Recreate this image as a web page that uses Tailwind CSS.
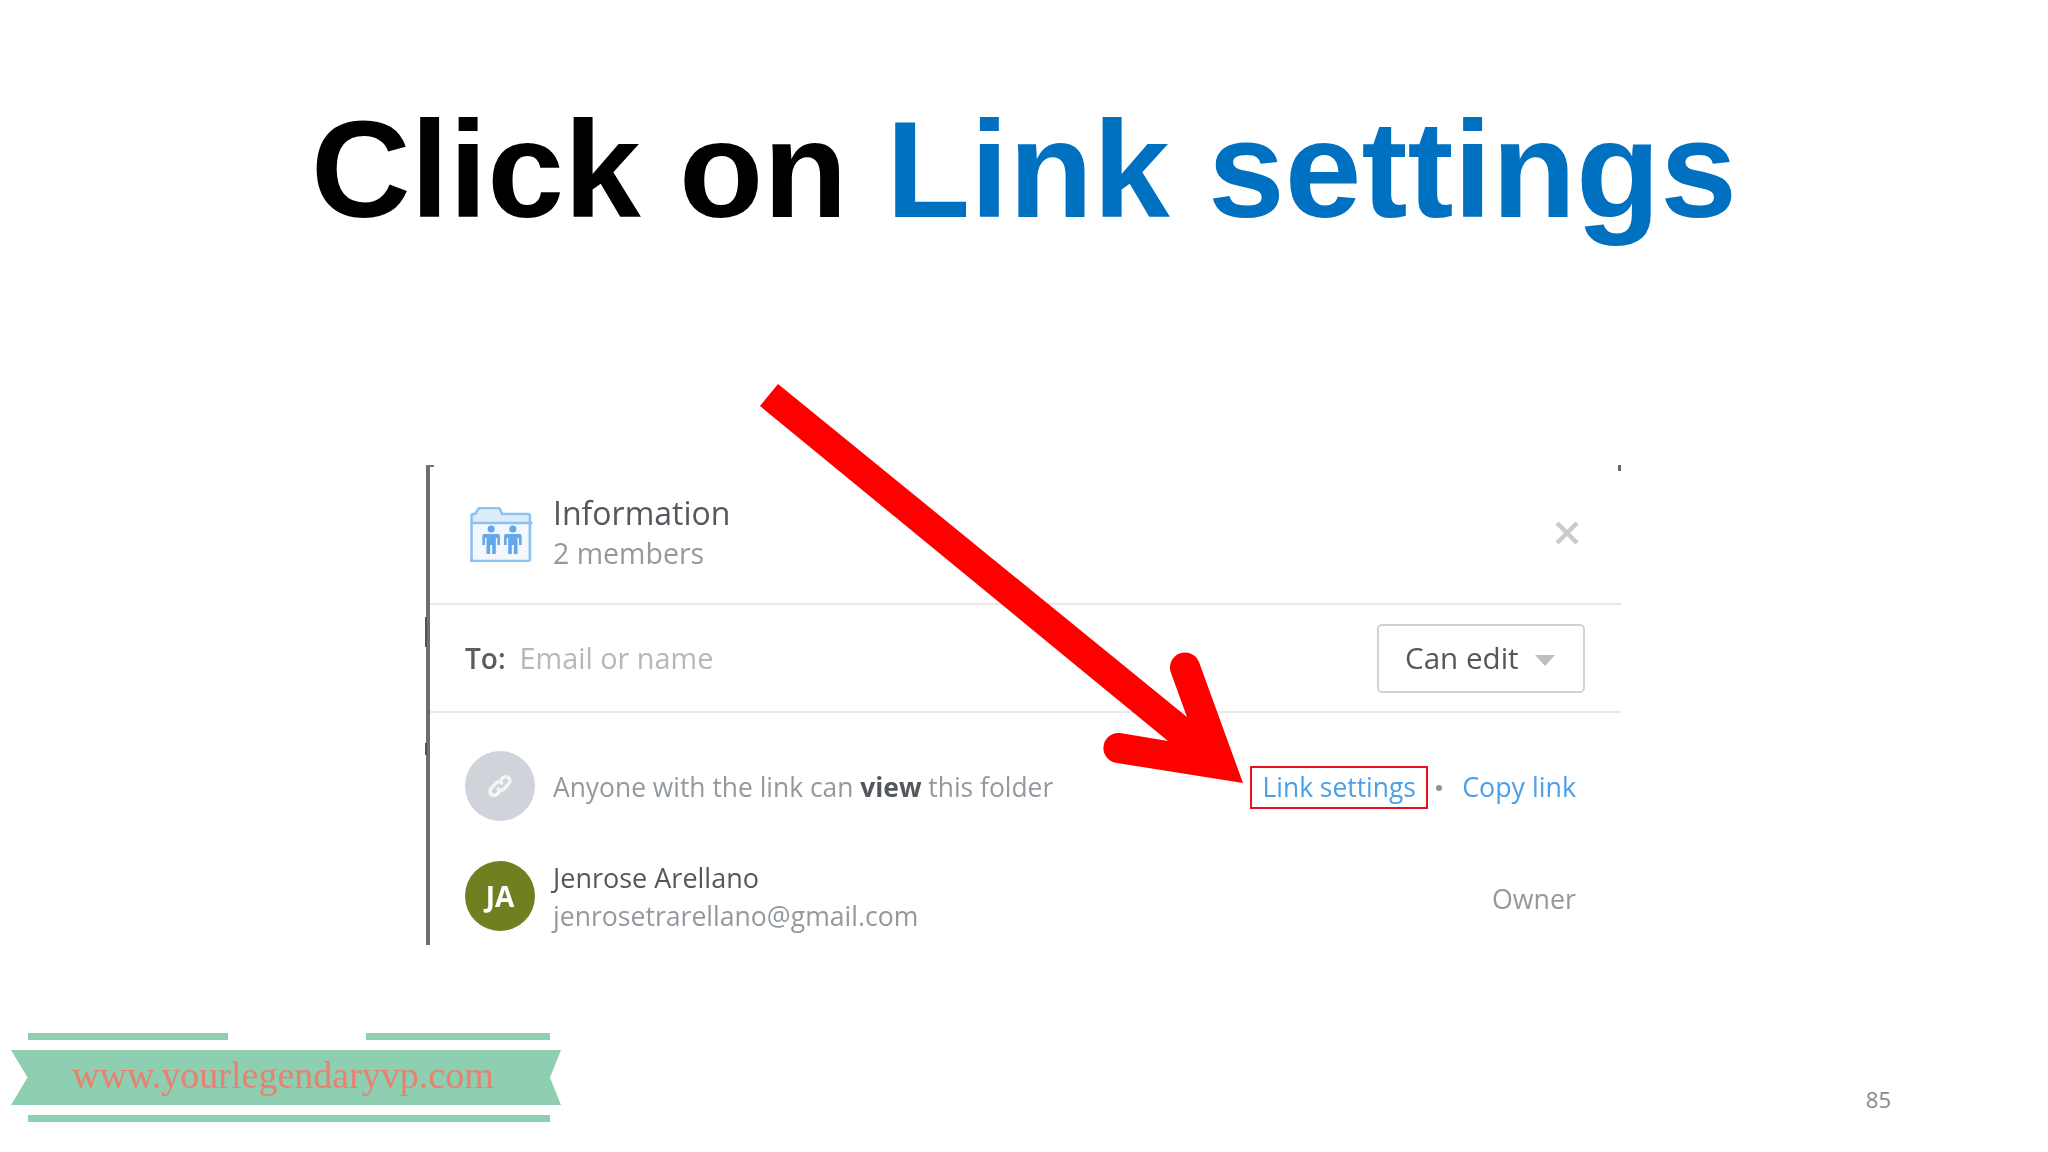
<!DOCTYPE html>
<html lang="en">
<head>
  <meta charset="UTF-8">
  <title>Click on Link settings</title>
  <script src="https://cdn.jsdelivr.net/npm/@tailwindcss/browser@4"></script>
</head>
<body class="bg-white font-['Open_Sans',sans-serif]">
  <div class="relative w-[2048px] h-[1152px] overflow-hidden">
    <h1 class="pt-[89px] h-[465px] text-center text-[138px] leading-[160px] font-bold font-['Liberation_Sans',sans-serif] text-black">Click on <span class="text-[#0070c0]">Link settings</span></h1>

    <!-- screenshot of the share panel, soft like the upscaled original -->
    <div class="ml-[426px] w-[1195px] h-[480px] border-l-[4px] border-[#6e6e6e] flex flex-col [&_span]:blur-[0.6px] [&_svg]:blur-[0.5px]">
      <div class="h-[140px] shrink-0 border-b-2 border-[#e6e8eb] flex items-center pl-10 pr-[42px] pb-[3px]">
        <svg class="w-[64px] h-[55px] shrink-0 mt-[3px]" viewBox="0 0 62 55" preserveAspectRatio="none" fill="none">
          <path d="M1.500 16V9q0-2 2-2h1.500l3-5q.7-1 2-1h17q1.300 0 2 1l2 5h25q2 0 2 2v7z" fill="#dcecfb"/>
          <path d="M1.500 16h59v36q0 2-2 2h-55q-2 0-2-2z" fill="#f3f8fe"/>
          <path d="M1.500 52V9q0-2 2-2h1.500l3-5q.7-1 2-1h17q1.300 0 2 1l2 5h25q2 0 2 2v43q0 2-2 2h-55q-2 0-2-2zM1.500 16h59" stroke="#8cc1f2" stroke-width="2.500"/>
          <g fill="#62a8ea">
            <g transform="translate(20.500)">
              <circle cx="0" cy="22" r="3.500"/>
              <path d="M-8.500 29q0-2 2-2h13q2 0 2 2v9h-2.500v-7h-1.500v16h-3.500v-9h-2v9h-3.500v-16h-1.500v7h-2.500z"/>
            </g>
            <g transform="translate(41.500)">
              <circle cx="0" cy="22" r="3.500"/>
              <path d="M-8.500 29q0-2 2-2h13q2 0 2 2v9h-2.500v-7h-1.500v16h-3.500v-9h-2v9h-3.500v-16h-1.500v7h-2.500z"/>
            </g>
          </g>
        </svg>
        <div class="ml-[19px] flex flex-col">
          <span class="text-[32px] leading-[40px] font-medium text-[#54585c]">Information</span>
          <span class="text-[28.500px] leading-[40px] text-[#94999e]">2 members</span>
        </div>
        <svg class="ml-auto w-6 h-6 text-[#c8cbce]" viewBox="0 0 24 24" fill="none" stroke="currentColor" stroke-width="4.500"><path d="M2 2l20 20M22 2L2 22"/></svg>
      </div>

      <div class="h-[108px] shrink-0 border-b-2 border-[#e6e8eb] flex items-center pl-[35px] pr-[36px]">
        <span class="text-[28px] font-semibold text-[#5a5e62]">To:</span>
        <span class="ml-[14px] text-[28.800px] text-[#b4b8bc]">Email or name</span>
        <div class="ml-auto w-[208px] h-[69px] border-2 border-[#d0d2d5] rounded-[5px] flex items-center pl-[26px] gap-[16px]">
          <span class="text-[29.600px] text-[#54585c]">Can edit</span>
          <span class="w-0 h-0 border-x-[10px] border-t-[11px] border-x-transparent border-t-[#bcbfc2] mt-1"></span>
        </div>
      </div>

      <div class="h-[146px] shrink-0 flex items-center pl-[35px] pr-[45px]">
        <div class="w-[70px] h-[70px] rounded-full bg-[#d0d4da] flex items-center justify-center shrink-0">
          <svg class="w-7 h-7" viewBox="0 0 24 24" fill="none" stroke="#f3f5f7" stroke-width="3" stroke-linecap="round"><path d="M10.500 14.500a3.500 3.500 0 0 0 5 0l4-4.500a3.500 3.500 0 0 0-5-5l-1.500 1.500"/><path d="M13.500 9.500a3.500 3.500 0 0 0-5 0l-4 4.500a3.500 3.500 0 0 0 5 5l1.500-1.500"/></svg>
        </div>
        <span class="ml-[18px] mt-[3px] text-[26.400px] text-[#94999e]">Anyone with the link can <b class="font-bold text-[#54585c]">view</b> this folder</span>
        <a class="ml-auto mr-[8px] mt-[3px] w-[178px] h-[43px] border-2 border-[#e8101f] flex items-center justify-center"><span class="text-[26.400px] text-[#4a9fe8]">Link settings</span></a>
        <span class="mt-[3px] w-[6px] h-[6px] bg-[#8f9396] rounded-full"></span>
        <a class="ml-5 mt-[3px]"><span class="text-[26.800px] text-[#4a9fe8]">Copy link</span></a>
      </div>

      <div class="flex-1 flex items-start pl-[35px] pr-[45px]">
        <div class="mt-[2px] w-[70px] h-[70px] rounded-full bg-[#6f8020] text-white font-bold text-[28px] flex items-center justify-center shrink-0"><span>JA</span></div>
        <div class="ml-[18px] flex flex-col">
          <span class="text-[27px] leading-[38px] font-medium text-[#54585c]">Jenrose Arellano</span>
          <span class="text-[26.600px] leading-[38px] text-[#94999e]">jenrosetrarellano@gmail.com</span>
        </div>
        <span class="ml-auto mt-5 text-[26.800px] text-[#94999e]">Owner</span>
      </div>
    </div>

    <!-- scraps of the cropped screenshot edge -->
    <div class="absolute left-[426px] top-[465px] w-[8px] h-[2px] bg-[#777]"></div>
    <div class="absolute left-[425px] top-[617px] w-[2px] h-[30px] bg-[#555]"></div>
    <div class="absolute left-[425px] top-[743px] w-[2px] h-[12px] bg-[#555]"></div>
    <div class="absolute left-[1618px] top-[465px] w-[3px] h-[6px] bg-[#666]"></div>

    <!-- red arrow over the panel -->
    <svg class="absolute left-0 top-0 w-[2048px] h-[1152px] pointer-events-none" viewBox="0 0 2048 1152">
      <path fill="#ff0000" d="M778 384L1187 717L1171 673A15 15 0 0 1 1199 662L1243 783L1117 763A15 15 0 0 1 1120 733L1168 741L760 406Z"/>
    </svg>

    <!-- footer -->
    <div class="absolute left-0 right-0 top-[1033px] flex justify-between">
      <div class="ml-[11px] w-[550px] flex flex-col">
        <div class="ml-[17px] w-[522px] h-[7px] flex justify-between">
          <span class="w-[200px] bg-[#8dcfb0]"></span>
          <span class="w-[184px] bg-[#8dcfb0]"></span>
        </div>
        <div class="mt-[10px] h-[55px] bg-[#8dcfb0] [clip-path:polygon(0_0,100%_0,98%_50%,100%_100%,0_100%,3%_50%)] pl-[61px] font-['Liberation_Serif',serif] text-[38px] leading-[50px] text-[#e98170]"><span class="blur-[0.5px] inline-block">www.yourlegendaryvp.com</span></div>
        <div class="mt-[10px] ml-[17px] w-[522px] h-[7px] bg-[#8dcfb0]"></div>
      </div>
      <span class="mr-[157px] mt-[50px] text-[22px] text-[#8a8a8a]">85</span>
    </div>
  </div>
</body>
</html>
